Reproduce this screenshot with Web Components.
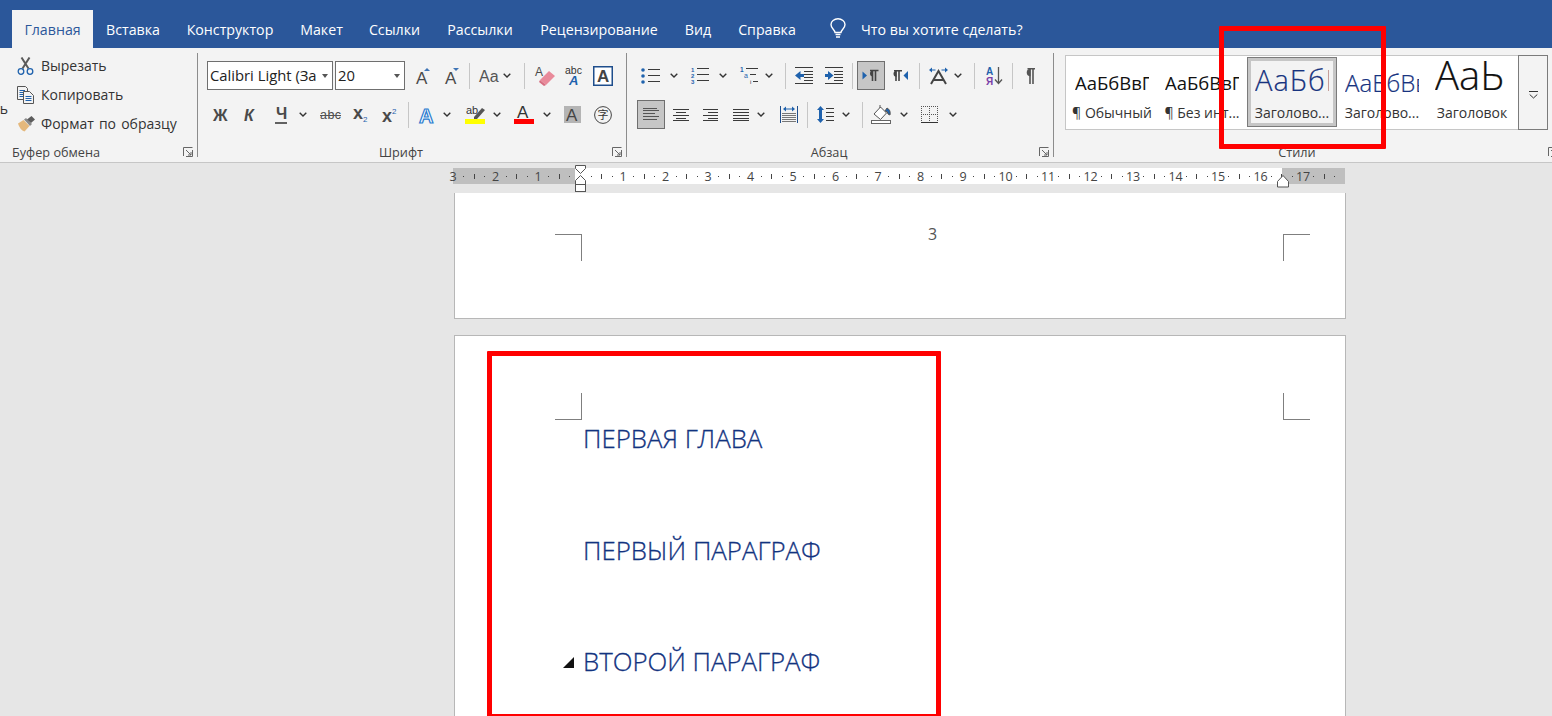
<!DOCTYPE html>
<html lang="ru">
<head>
<meta charset="utf-8">
<title>Документ</title>
<style>
  html, body { margin: 0; height: 716px; overflow: hidden; background: #e6e6e6; }
  body { font-family: "Open Sans", "Noto Sans", sans-serif; position: relative; }
</style>
</head>
<body>
<word-tabs>
  <word-tab w="81" active>Главная</word-tab>
  <word-tab w="80">Вставка</word-tab>
  <word-tab w="114">Конструктор</word-tab>
  <word-tab w="69">Макет</word-tab>
  <word-tab w="77">Ссылки</word-tab>
  <word-tab w="94">Рассылки</word-tab>
  <word-tab w="144">Рецензирование</word-tab>
  <word-tab w="54">Вид</word-tab>
  <word-tab w="84">Справка</word-tab>
  <tell-me>Что вы хотите сделать?</tell-me>
</word-tabs>

<word-ribbon>
  <ribbon-group label="Буфер обмена" width="198" start>
    <clip-board>
      <clip-item icon="cut">Вырезать</clip-item>
      <clip-item icon="copy">Копировать</clip-item>
      <clip-item icon="brush">Формат по образцу</clip-item>
    </clip-board>
  </ribbon-group>

  <ribbon-group label="Шрифт" width="429" pad="9">
    <rb-row>
      <font-combo w="126">Calibri Light (За</font-combo>
      <font-combo w="70" ml="2">20</font-combo>
      <rb-icon n="grow" ml="11"></rb-icon><rb-icon n="shrink" ml="15"></rb-icon>
      <rb-icon n="sep" ml="10"></rb-icon>
      <rb-icon n="aa" ml="9"></rb-icon><rb-icon n="caret" ml="6"></rb-icon>
      <rb-icon n="sep" ml="13"></rb-icon>
      <rb-icon n="eraser" ml="10"></rb-icon><rb-icon n="phon" ml="10"></rb-icon><rb-icon n="boxa" ml="11"></rb-icon>
    </rb-row>
    <rb-row>
      <rb-icon n="bold" ml="6"></rb-icon><rb-icon n="ital" ml="14"></rb-icon><rb-icon n="under" ml="16"></rb-icon>
      <rb-icon n="caret" ml="10"></rb-icon>
      <rb-icon n="strike" ml="13"></rb-icon><rb-icon n="sub" ml="12"></rb-icon><rb-icon n="sup" ml="15"></rb-icon>
      <rb-icon n="sep" ml="11"></rb-icon>
      <rb-icon n="effect" ml="10"></rb-icon><rb-icon n="caret" ml="8"></rb-icon>
      <rb-icon n="marker" ml="14"></rb-icon><rb-icon n="caret" ml="8"></rb-icon>
      <rb-icon n="color" ml="13"></rb-icon><rb-icon n="caret" ml="9"></rb-icon>
      <rb-icon n="shade" ml="13"></rb-icon><rb-icon n="enclose" ml="13"></rb-icon>
    </rb-row>
  </ribbon-group>

  <ribbon-group label="Абзац" width="427" pad="10">
    <rb-row>
      <rb-icon n="bullets" ml="4"></rb-icon><rb-icon n="caret" ml="10"></rb-icon>
      <rb-icon n="numbers" ml="13"></rb-icon><rb-icon n="caret" ml="10"></rb-icon>
      <rb-icon n="multi" ml="13"></rb-icon><rb-icon n="caret" ml="7"></rb-icon>
      <rb-icon n="sep" ml="12"></rb-icon>
      <rb-icon n="outdent" ml="9"></rb-icon><rb-icon n="indent" ml="12"></rb-icon>
      <rb-icon n="sep" ml="9"></rb-icon>
      <rb-icon n="ltr" ml="4" pressed></rb-icon><rb-icon n="rtl" ml="8"></rb-icon>
      <rb-icon n="sep" ml="11"></rb-icon>
      <rb-icon n="asian" ml="9"></rb-icon><rb-icon n="caret" ml="6"></rb-icon>
      <rb-icon n="sep" ml="12"></rb-icon>
      <rb-icon n="sort" ml="11"></rb-icon>
      <rb-icon n="sep" ml="9"></rb-icon>
      <rb-icon n="pilcrow" ml="11"></rb-icon>
    </rb-row>
    <rb-row>
      <rb-icon n="left" pressed></rb-icon><rb-icon n="center" ml="8"></rb-icon><rb-icon n="right" ml="14"></rb-icon>
      <rb-icon n="justify" ml="15"></rb-icon><rb-icon n="caret" ml="8"></rb-icon>
      <rb-icon n="distrib" ml="15"></rb-icon>
      <rb-icon n="sep" ml="9"></rb-icon>
      <rb-icon n="spacing" ml="9"></rb-icon><rb-icon n="caret" ml="8"></rb-icon>
      <rb-icon n="sep" ml="12"></rb-icon>
      <rb-icon n="fill" ml="8"></rb-icon><rb-icon n="caret" ml="9"></rb-icon>
      <rb-icon n="borders" ml="13"></rb-icon><rb-icon n="caret" ml="11"></rb-icon>
    </rb-row>
  </ribbon-group>

  <ribbon-group label="Стили" width="508" pad="11" plain>
    <style-gallery>
      <style-card label="¶ Обычный" size="18.5" base="4" color="#111">АаБбВвГг</style-card>
      <style-card label="¶ Без инт..." size="18.5" base="4" color="#111">АаБбВвГг</style-card>
      <style-card label="Заголово..." size="29" base="1" spacing="1" color="#17337f" light selected>АаБбВ</style-card>
      <style-card label="Заголово..." size="24" base="1" color="#17337f" light>АаБбВв</style-card>
      <style-card label="Заголовок" size="40" color="#111" light>АаЬ</style-card>
    </style-gallery>
  </ribbon-group>
</word-ribbon>

<word-ruler></word-ruler>

<doc-page class="first">
  <page-marks>
    <crop-mark corner="tl"></crop-mark>
    <span>3</span>
    <crop-mark corner="tr"></crop-mark>
  </page-marks>
</doc-page>
<doc-page>
  <page-marks>
    <crop-mark corner="bl"></crop-mark>
    <crop-mark corner="br"></crop-mark>
  </page-marks>
  <doc-heading>ПЕРВАЯ ГЛАВА</doc-heading>
  <doc-heading>ПЕРВЫЙ ПАРАГРАФ</doc-heading>
  <doc-heading fold>ВТОРОЙ ПАРАГРАФ</doc-heading>
</doc-page>

<note-frame x="1219" y="26" w="167" h="123"></note-frame>
<note-frame x="487" y="351" w="454" h="368"></note-frame>

<script>
const INK = '#4a4a4a';
const BLUE = '#1f62ad';
const line = (x1, y1, x2, y2, c = '#3a3a3a', s = 1) =>
  `<line x1="${x1}" y1="${y1}" x2="${x2}" y2="${y2}" stroke="${c}" stroke-width="${s}"/>`;
const rows = (x1, x2, ys, c) => ys.map(y => line(x1, y + .5, x2, y + .5, c)).join('');
const txt = (x, y, size, s, c = INK, extra = '') =>
  `<text x="${x}" y="${y}" font-size="${size}" fill="${c}" ${extra}>${s}</text>`;
const SANS = 'font-family="Liberation Sans"';

// every icon: [width, height, svg body]
const ICONS = {
  sep: [1, 26, `<rect width="1" height="26" fill="#c6c6c6"/>`],
  caret: [8, 5, `<path d="M.7.7 4 4l3.3-3.3" fill="none" stroke="#333" stroke-width="1.4"/>`],
  cut: [17, 18, `<path d="M5.5 11.5 12.5.5M11.5 11.5 4.5.5" stroke="#5a5a5a" stroke-width="2" fill="none"/>
    <circle cx="4" cy="14.5" r="2.8" fill="none" stroke="${BLUE}" stroke-width="1.3"/>
    <circle cx="13" cy="14.5" r="2.8" fill="none" stroke="${BLUE}" stroke-width="1.3"/>`],
  copy: [17, 18, `<path d="M.5.5h8l2 2v11H.5z" fill="#f3f3f3" stroke="#555"/>
    ${rows(2.5, 8, [4, 6, 8, 10], BLUE)}
    <path d="M6.5 5.5h6l4 4v8h-10z" fill="#f3f3f3" stroke="#555"/>
    ${rows(8.5, 14.5, [10, 12, 14], BLUE)}`],
  brush: [18, 16, `<path d="M1 7.5 6.5 4l6 6-5 5.5Q3 14 1 7.5z" fill="#e4b87c"/>
    <path d="M7 3.5 9 2l6 6-2 2z" fill="#8a8a8a"/><path d="M10 3.5 14.5 0 18 3.5 14 7z" fill="#5c5c5c"/>`],
  grow: [14, 16, `${txt(0, 16, 17, 'A', INK, SANS)}<path d="M8 3 11 0l3 3z" fill="#3f74b5"/>`],
  shrink: [14, 16, `${txt(0, 16, 17, 'A', INK, SANS)}<path d="M8 0h6l-3 3z" fill="#3f74b5"/>`],
  aa: [18, 14, `${txt(0, 13, 16, 'Aa', '#555', SANS)}`],
  eraser: [20, 20, `${txt(0, 10, 12, 'A', INK, SANS)}<path d="M5 14 14 5l6 5-9 9z" fill="#e98a9a"/><path d="M5 14l6 5-2 1-5-4z" fill="#d66d80"/>`],
  phon: [17, 19, `${txt(0, 8, 10.5, 'abc', '#333', SANS)}${txt(4, 19, 13, 'A', BLUE, SANS + ' font-weight="700" font-style="italic"')}`],
  boxa: [20, 20, `<rect x=".75" y=".75" width="18.5" height="18.5" fill="#fff" stroke="#1f4e8c" stroke-width="1.5"/>${txt(4, 16, 17, 'A', '#444', SANS + ' font-weight="700"')}`],
  bold: [16, 14, `${txt(0, 13, 16, '\u0416', INK, SANS + ' font-weight="700" textLength="16"')}`],
  ital: [15, 14, `${txt(1, 13, 16, '\u041a', INK, SANS + ' font-weight="700" font-style="italic"')}`],
  under: [15, 18, `${txt(2, 13, 16, '\u0427', INK, SANS + ' font-weight="700"')}${line(1, 17, 13, 17, '#222', 1.4)}`],
  strike: [21, 12, `${txt(0, 10, 12.5, 'abc', INK, SANS + ' textLength="21"')}${line(0, 6.5, 21, 6.5, '#555')}`],
  sub: [14, 14, `${txt(0, 11, 18, 'x', INK, SANS + ' font-weight="700"')}${txt(10, 14, 8, '2', BLUE, SANS)}`],
  sup: [15, 14, `${txt(0, 14, 18, 'x', INK, SANS + ' font-weight="700"')}${txt(10, 6, 8, '2', BLUE, SANS)}`],
  effect: [16, 18, `${txt(0, 17, 20, 'A', '#fff', SANS + ` font-weight="700" stroke="#2c7cd0" stroke-width="1.2"`)}`],
  marker: [20, 19, `${txt(1, 9, 11, 'ab', '#333', SANS)}<path d="M9 12 17 3l3 2-8 9-3 .5z" fill="#555"/><rect y="14" width="20" height="5" fill="#ff0"/>`],
  color: [20, 19, `${txt(3, 13, 17, 'A', '#333', SANS)}<rect y="14" width="20" height="5" fill="#f00"/>`],
  shade: [17, 17, `<rect width="17" height="17" fill="#b4b4b4"/>${txt(2, 15, 17, 'A', '#444', SANS)}`],
  enclose: [18, 18, `<circle cx="9" cy="9" r="8.4" fill="none" stroke="#444" stroke-width="1"/>${txt(3.5, 13, 11, '字', '#333', 'font-family="Noto Sans CJK SC"')}`],
  bullets: [19, 16, `<circle cx="2" cy="2" r="1.8" fill="${BLUE}"/><circle cx="2" cy="8" r="1.8" fill="${BLUE}"/><circle cx="2" cy="14" r="1.8" fill="${BLUE}"/>${rows(7, 19, [1, 7, 13])}`],
  numbers: [18, 17, `${txt(0, 5, 6, '1', BLUE, SANS + ' font-weight="700"')}${txt(0, 11, 6, '2', BLUE, SANS + ' font-weight="700"')}${txt(0, 17, 6, '3', BLUE, SANS + ' font-weight="700"')}${rows(6, 18, [1, 7, 13])}`],
  multi: [18, 17, `${txt(0, 5, 6.5, '1', BLUE, SANS + ' font-weight="700"')}${txt(4, 11, 7, 'a', BLUE, SANS)}${txt(10, 17, 6, 'i', '#333', SANS)}${rows(6, 18, [1])}${rows(10, 16, [7])}${rows(13, 18, [14])}`],
  outdent: [18, 17, `${rows(0, 18, [0, 16])}${rows(9, 18, [4, 7, 10, 13])}<path d="M0 8.5 5.5 4v3H9v3H5.5v3z" fill="${BLUE}"/>`],
  indent: [18, 17, `${rows(0, 18, [0, 16])}${rows(9, 18, [4, 7, 10, 13])}<path d="M8.5 8.5 3 4v3H0v3h3v3z" fill="${BLUE}"/>`],
  ltr: [28, 29, `<path d="M5.5 10.5 10 14.5l-4.5 4z" fill="${BLUE}"/><path d="M13 9.5h8.5M15.5 9.5V20M18.5 9.5V20" stroke="#444" stroke-width="1.6"/><path d="M16 9.5a3 3 0 0 0 0 6z" fill="#444"/>`],
  rtl: [15, 11, `<path d="M1 .8h8M3 .8V11M6 .8V11" stroke="#444" stroke-width="1.6"/><path d="M3.5 .8a3 3 0 0 0 0 6z" fill="#444"/><path d="M15 1v9l-4.5-4.5z" fill="${BLUE}"/>`],
  asian: [19, 17, `<path d="M0 3 3 .5v2h3.5v1H3v2zM19 3 16 .5v2h-3.5v1H16v2z" fill="${BLUE}"/><path d="M2 17 9.5 4 17 17M4.5 13h10" fill="none" stroke="#444" stroke-width="2"/>`],
  sort: [17, 18, `${txt(0, 8, 10, 'А', BLUE, SANS + ' font-weight="700"')}${txt(0, 17.5, 10, 'Я', '#7a3ea8', SANS + ' font-weight="700"')}<path d="M12.5 0v16M9 12.5l3.5 4 3.5-4" fill="none" stroke="#555" stroke-width="1.3"/>`],
  pilcrow: [11, 16, `<path d="M3.5 .8H11M6 .8V16M9 .8V16" stroke="#555" stroke-width="1.6"/><path d="M6.5.8a3.4 3.4 0 0 0 0 7.5z" fill="#555"/>`],
  left: [28, 29, rows(6, 20, [8, 19], '#555') + rows(6, 22, [10, 16], '#555') + rows(6, 18, [13], '#555')],
  center: [16, 12, rows(0, 16, [0, 6, 11]) + rows(3, 13, [3, 9])],
  right: [15, 12, rows(0, 15, [0, 6, 11]) + rows(5, 15, [3, 9])],
  justify: [16, 12, rows(0, 16, [0, 3, 6, 9, 11])],
  distrib: [18, 17, `${line(.5, 0, .5, 17, '#1f4e8c')}${line(17.5, 0, 17.5, 17, '#1f4e8c')}<path d="M3 3 6 .5v2h6v-2l3 2.5-3 2.5v-2H6v2z" fill="${BLUE}"/>${rows(2, 16, [7, 9, 11, 13, 15], '#777')}`],
  spacing: [17, 17, `<path d="M3.5 0 7 4H5v9h2l-3.5 4L0 13h2V4H0z" fill="${BLUE}"/>${rows(9, 17, [2, 6, 10, 14])}`],
  fill: [20, 19, `<path d="M3 9 9.5 2l6 6-6 6.5z" fill="#fff" stroke="#555"/><path d="M9 3V0M16 3q4 2 3 7l-2-1q0-3-3-3z" stroke="#555" fill="${BLUE}"/><rect x=".5" y="15.5" width="19" height="3" fill="#fff" stroke="#666"/>`],
  borders: [17, 17, `<path d="M.5 0v16M8.5 0v16M16.5 0v16M0 .5h17M0 8.5h17" stroke="#555" stroke-dasharray="1 1"/>${line(0, 16.5, 17, 16.5, '#333')}`],
  launcher: [10, 10, `<path d="M.5 9V.5H9.5M9.5 3v6.5H3M3 3l5 5M5 8h3V5" fill="none" stroke="#666"/>`],
  bulb: [16, 21, `<path d="M5 14.5C4.5 11 1 10.5 1 6.5a7 5.7 0 0 1 14 0c0 4-3.5 4.5-4 8z" fill="none" stroke="#fff" stroke-width="1.4"/><path d="M5.5 16.5h5M6 19h4" stroke="#fff" stroke-width="1.4"/>`],
  more: [9, 8, `<path d="M0 .5h9M.7 3.5 4.5 7l3.8-3.5" fill="none" stroke="#333"/>`],
};

const svgFor = name => {
  const [w, h, body] = ICONS[name];
  return `<svg width="${w}" height="${h}" viewBox="0 0 ${w} ${h}" aria-hidden="true">${body}</svg>`;
};

// shadow root from one string: style + markup
const define = (tag, html) => {
  customElements.define(tag, class extends HTMLElement {
    connectedCallback() {
      if (this.shadowRoot) return;
      const root = this.attachShadow({ mode: 'open' });
      root.innerHTML = typeof html === 'function' ? html(this) : html;
    }
  });
};
const num = (el, name, d = 0) => Number(el.getAttribute(name) ?? d);

define('word-tabs', `<style>
  :host { display: flex; height: 48px; padding-left: 12px; background: #2b579a; box-sizing: border-box; font: 14.2px "Open Sans", sans-serif; }
</style><slot></slot>`);

define('word-tab', el => `<style>
  :host { display: flex; flex: none; width: ${num(el, 'w')}px; margin-top: 10px; height: 38px; align-items: center; justify-content: center; color: #fff; }
  :host([active]) { background: #f3f3f3; color: #2b579a; }
</style><slot></slot>`);

define('tell-me', `<style>
  :host { display: flex; align-items: center; gap: 15px; margin: 10px 0 0 21px; height: 38px; color: #fff; }
  svg { display: block; margin-top: -2px; }
</style>${svgFor('bulb')}<slot></slot>`);

define('word-ribbon', `<style>
  :host { display: flex; height: 115px; box-sizing: border-box; background: #f3f3f3; border-bottom: 1px solid #c6c6c6; overflow: hidden; font: 13px "Open Sans", sans-serif; color: #333; }
</style><slot></slot>`);

define('ribbon-group', el => `<style>
  :host { display: flex; flex: none; width: ${num(el, 'width')}px; box-sizing: border-box; }
  .body { flex: 1; min-width: 0; display: flex; flex-direction: column; }
  .main { flex: 1; display: flex; flex-direction: column; gap: 10px; padding: 13px 0 0 ${num(el, 'pad')}px; }
  .foot { display: flex; height: 20px; align-items: center; }
  .name { flex: 1; text-align: center; font-size: 12.7px; color: #444; }
  :host([start]) .name { text-align: left; padding-left: 12px; }
  .launch { width: 22px; box-sizing: border-box; padding-right: 4px; display: flex; justify-content: flex-end; }
  svg { display: block; }
  .rule { flex: none; width: 1px; margin: 5px 0; background: #8c8c8c; }
  :host([plain]) .rule { display: none; }
  :host([start]) .main { padding-top: 3px; }
</style>
<div class="body">
  <div class="main"><slot></slot></div>
  <div class="foot"><span class="name">${el.getAttribute('label')}</span><span class="launch">${svgFor('launcher')}</span></div>
</div>
<div class="rule"></div>`);

define('rb-row', `<style>
  :host { display: flex; align-items: center; height: 29px; }
</style><slot></slot>`);

define('rb-icon', el => `<style>
  :host { display: block; flex: none; margin-left: ${num(el, 'ml')}px; line-height: 0; font-family: "Liberation Sans", sans-serif; }
  :host([pressed]) { background: #c6c6c6; outline: 1px solid #6f6f6f; outline-offset: -1px; }
  svg { display: block; overflow: visible; }
</style>${svgFor(el.getAttribute('n'))}`);

define('font-combo', el => `<style>
  :host { display: flex; flex: none; box-sizing: border-box; width: ${num(el, 'w')}px; height: 29px; margin-left: ${num(el, 'ml')}px; align-items: center; background: #fff; border: 1px solid #6f6f6f; font: 14.8px/20px "Open Sans", sans-serif; color: #222; }
  .v { flex: 1; min-width: 0; overflow: hidden; white-space: nowrap; padding: 0 0 2px 2px; }
  i { flex: none; margin: 0 4px 0 5px; border: 3.5px solid transparent; border-top: 4px solid #555; border-bottom: 0; }
</style><span class="v"><slot></slot></span><i></i>`);

define('clip-board', `<style>
  :host { display: flex; }
  .paste { flex: none; display: flex; justify-content: flex-end; width: 8px; margin: 49px 9px 0 0; overflow: hidden; height: 18px; line-height: 18px; font-size: 14px; white-space: nowrap; }
  .list { display: flex; flex-direction: column; }
</style><span class="paste"><span>ть</span></span><div class="list"><slot></slot></div>`);

define('clip-item', el => `<style>
  :host { display: flex; height: 29px; align-items: center; font-size: 14px; word-spacing: 1.5px; white-space: nowrap; }
  .i { width: 24px; flex: none; }
  svg { display: block; }
</style><span class="i">${svgFor(el.getAttribute('icon'))}</span><slot></slot>`);

define('style-gallery', `<style>
  :host { display: flex; box-sizing: border-box; width: 483px; height: 75px; margin-top: -6px; }
  .cards { display: flex; width: 453px; box-sizing: border-box; padding: 1px 0 0 1px; background: #fff; border: 1px solid #c6c6c6; border-right: 0; }
  .more { width: 30px; box-sizing: border-box; border: 1px solid #7b7b7b; display: flex; align-items: center; justify-content: center; }
  svg { display: block; margin-top: 4px; }
</style><div class="cards"><slot></slot></div><div class="more">${svgFor('more')}</div>`);

define('style-card', el => {
  const sel = el.hasAttribute('selected');
  const base = num(el, 'base');
  return `<style>
    :host { display: flex; flex-direction: column; flex: none; width: 90px; height: 70px; box-sizing: border-box; padding: 0 8px; }
    :host([selected]) { background: #f3f3f3; border: 4px solid #c6c6c6; outline: 1px solid #7b7b7b; outline-offset: -1px; padding: 0 4px; }
    .p { display: flex; align-items: flex-end; height: ${(sel ? 36 : 40) - base}px; margin-bottom: ${base}px; overflow: hidden; white-space: nowrap; color: ${el.getAttribute('color')}; letter-spacing: ${num(el, 'spacing')}px; font: ${el.hasAttribute('light') ? 300 : 400} ${num(el, 'size')}px/1.1 "Open Sans", sans-serif; ${el.hasAttribute('light') ? '-webkit-text-stroke: .2px currentColor;' : ''} }
    .l { text-align: center; white-space: nowrap; font-size: 14px; margin: 6px -8px 0; }
  </style><div class="p"><slot></slot></div><div class="l">${el.getAttribute('label')}</div>`;
});

define('word-ruler', () => {
  let cells = '';
  const labels = [3, 2, 1, 0, 1, 2, 3, 4, 5, 6, 7, 8, 9, 10, 11, 12, 13, 14, 15, 16, 17];
  labels.forEach((n, i) => {
    const mark = i === 3 ? '' : `<b>${n}</b>`;
    cells += `<span class="c">${mark}</span><span class="c"><i class="d"></i></span><span class="c"><i class="l"></i></span><span class="c"><i class="d"></i></span>`;
  });
  return `<style>
    :host { display: block; position: relative; margin: 5px 0 9px 453px; width: 892px; height: 16px; }
    .strip { display: flex; height: 16px; background: linear-gradient(to right, #bfbfbf 122px, #fff 122px, #fff 829px, #bfbfbf 829px); font: 12.5px "Open Sans", sans-serif; color: #444; }
    .cells { display: flex; margin-left: -5.31px; }
    .c { flex: none; width: 10.625px; height: 16px; display: flex; align-items: center; justify-content: center; }
    b { font-weight: 400; flex: none; }
    .d { width: 1px; height: 1px; background: #444; }
    .l { width: 1px; height: 5px; background: #444; }
    .m { position: absolute; display: block; }
  </style><div class="strip"><div class="cells">${cells}</div></div>
  <svg class="m" style="left:122px;top:-3px" width="11" height="28" viewBox="0 0 11 28">
    <path d="M.5.5h10v3l-5 5-5-5z" fill="#fff" stroke="#555"/><path d="M5.5 10.5l5 5v4H.5v-4z" fill="#fff" stroke="#555"/><rect x=".5" y="19.5" width="10" height="7" fill="#fff" stroke="#555"/>
  </svg>
  <svg class="m" style="left:824px;top:7px" width="12" height="13" viewBox="0 0 12 13">
    <path d="M6 .5l5.500 6v5.500H.5V6.500z" fill="#fff" stroke="#555"/>
  </svg>`;
});

define('doc-page', `<style>
  :host { display: block; box-sizing: border-box; width: 892px; margin: 0 0 16px 454px; padding: 57px 35px 0 100px; height: 400px; background: #fff; border: 1px solid #b7b7b7; color: #444; }
  :host(.first) { height: 126px; border-top: 0; padding-top: 41px; }
</style><slot></slot>`);

define('page-marks', `<style>
  :host { display: flex; justify-content: space-between; align-items: flex-start; font: 16px/1 "Open Sans", sans-serif; color: #555; }
  ::slotted(span) { margin-top: -8px; }
</style><slot></slot>`);

define('crop-mark', el => {
  const b = '1px solid #7f7f7f';
  const sides = {
    tl: `border-top:${b};border-right:${b};`, tr: `border-top:${b};border-left:${b};`,
    bl: `border-bottom:${b};border-right:${b};`, br: `border-bottom:${b};border-left:${b};`,
  }[el.getAttribute('corner')];
  return `<style>:host { display: block; flex: none; box-sizing: border-box; width: 27px; height: 27px; ${sides} }</style>`;
});

define('doc-heading', el => `<style>
  :host { display: flex; align-items: center; height: 36px; margin-top: 75.5px; padding-left: 8px; font: 300 25.8px/36px "Open Sans", sans-serif; color: #12337f; -webkit-text-stroke: .3px currentColor; }
  :host(:nth-of-type(1)) { margin-top: 0; }
  .g { flex: none; width: 20px; display: flex; }
  svg { display: block; margin-top: 3px; }
</style><span class="g">${el.hasAttribute('fold') ? '<svg width="11" height="11" viewBox="0 0 11 11"><path d="M11 0v11H0z" fill="#111"/></svg>' : ''}</span><slot></slot>`);

define('note-frame', el => `<style>
  :host { position: absolute; left: ${num(el, 'x')}px; top: ${num(el, 'y')}px; width: ${num(el, 'w')}px; height: ${num(el, 'h')}px; box-sizing: border-box; border: 5px solid #f00; border-radius: 1px; pointer-events: none; }
</style>`);
</script>
</body>
</html>
